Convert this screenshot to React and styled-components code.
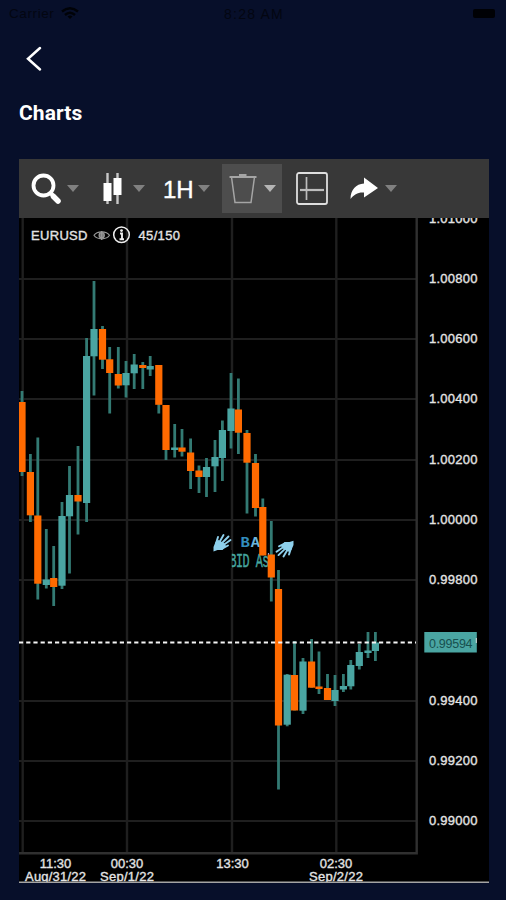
import styled, { createGlobalStyle } from "styled-components";

const GlobalStyle = createGlobalStyle`
  body {
    margin: 0;
    background-color: #070f2a;
    font-family: "Liberation Sans", Arial, sans-serif;
  }
`;
const Wrap = styled.div`
  box-sizing: border-box;
  width: 506px;
  height: 900px;
  padding: 0 17px 0 19px;
  background-color: #070f2a;
  overflow: hidden;
`;
const StatusBar = styled.div`
  display: grid;
  grid-template-columns: 1fr auto 1fr;
  align-items: center;
  height: 27px;
  margin: 0 -7px 0 -10px;
  font-size: 13.5px;
  letter-spacing: 0.6px;
  color: #030611;
`;
const Time = styled.span`
  padding-left: 3px;
  font-size: 14px;
  letter-spacing: 1.2px;
`;
const Carrier = styled.div`
  display: flex;
  align-items: center;
  gap: 7px;
`;
const Battery = styled.div`
  justify-self: end;
  width: 22px;
  height: 9px;
  margin-right: 1px;
  border-radius: 2px;
  background-color: #000105;
`;
const BackButton = styled.button`
  display: block;
  width: 30px;
  height: 30px;
  margin: 17px 0 0;
  padding: 0;
  border: 0;
  background: none;
`;
const Title = styled.h1`
  height: 24px;
  margin: 27px 0 34px;
  font-family: Roboto, sans-serif;
  font-size: 21px;
  font-weight: 700;
  letter-spacing: 0.1px;
  line-height: 24px;
  color: white;
`;
const Panel = styled.div`
  width: 470px;
  height: 724px;
  background-color: black;
`;
const Toolbar = styled.div`
  display: grid;
  grid-template-columns: 72px 66px 59px 72px 48px 74px;
  align-items: center;
  height: 59px;
  background-color: #383838;
`;
const Tool = styled.div`
  display: flex;
  align-items: center;
  justify-content: center;
  gap: ${(props) => props.$gap || 0}px;
  width: ${(props) => (props.$active ? "60px" : "auto")};
  height: 49px;
  justify-self: ${(props) => (props.$active ? "center" : "stretch")};
  background-color: ${(props) => (props.$active ? "#4d4d4d" : "transparent")};
`;
const Caret = styled.div`
  width: 0;
  height: 0;
  border-left: 6px solid transparent;
  border-right: 6px solid transparent;
  border-top: 7px solid ${(props) => (props.$light ? "#b5b5b5" : "#808080")};
`;
const Interval = styled.span`
  width: 30px;
  padding-top: 3px;
  font-size: 24px;
  letter-spacing: -0.2px;
  color: white;
  -webkit-text-stroke: 0.4px white;
`;
const ChartSvg = styled.svg`
  display: block;
`;
const Label = styled.text`
  font-family: "Liberation Sans", Arial, sans-serif;
  font-size: 13px;
  fill: #e4e4e4;
  stroke: #e4e4e4;
  stroke-width: 0.35px;
`;
const PriceTag = styled.text`
  font-family: "Liberation Sans", Arial, sans-serif;
  font-size: 12.5px;
  fill: #17504f;
`;
const MonoText = styled.text`
  font-family: "Liberation Mono", monospace;
  font-size: ${(props) => props.$size}px;
  font-weight: ${(props) => (props.$bold ? 700 : 400)};
`;

const UP = "#4aa5a2";
const DOWN = "#ff6a00";
const WICK = "#337a73";

// x, high, body top, body bottom, low, direction
const candles = [
  [22, 391, 402, 472, 476, 0],
  [30.4, 454, 472, 515.3, 522, 0],
  [37.8, 437.5, 515.5, 583.7, 599.5, 0],
  [46.3, 529, 579.5, 585, 588.5, 1],
  [53.7, 546, 578, 587, 606, 0],
  [62, 502, 516, 585.7, 589, 1],
  [69.5, 466, 495, 516.3, 573.5, 1],
  [78, 446, 495, 501.5, 534.5, 0],
  [86.6, 338, 356, 503, 522, 1],
  [94, 281, 329, 356.3, 395.5, 1],
  [102.5, 326, 329, 359.7, 369, 0],
  [109.7, 347, 359.3, 373, 413.5, 0],
  [118.3, 347, 374, 385.5, 388.5, 0],
  [126, 361, 373, 385.3, 397.5, 1],
  [134.2, 354, 364.5, 373.3, 389, 1],
  [142.8, 362, 365, 368, 389, 0],
  [150.2, 356, 366, 369.5, 376, 1],
  [158.8, 365, 365, 404.8, 413.5, 0],
  [166, 405, 405, 450, 460, 0],
  [174.7, 424, 447.5, 450, 457.5, 1],
  [182, 429, 447.5, 451.7, 456.5, 0],
  [190.6, 438.5, 452.5, 471, 489, 0],
  [199, 465.5, 470.5, 477, 493, 0],
  [206.5, 458, 467, 477, 497, 1],
  [215, 440, 457, 466.3, 492, 1],
  [222.4, 420.5, 430, 458, 481, 1],
  [231, 373, 408.5, 431, 448.5, 1],
  [238.4, 378.5, 409.5, 432.7, 454, 0],
  [247, 430, 433, 462.7, 513.5, 0],
  [255.5, 454, 463, 508, 516.5, 0],
  [262.8, 498.5, 507, 555.5, 555.5, 0],
  [271.3, 521, 554.5, 577.5, 601.5, 0],
  [278.5, 570, 589, 725.5, 789.5, 0],
  [287.2, 674, 674.7, 724.7, 726.3, 1],
  [294.5, 641, 675, 710.5, 710.5, 0],
  [303, 658, 661.5, 710.7, 714, 1],
  [311.6, 639, 661.5, 687.7, 687.7, 0],
  [319, 651.5, 686.5, 689, 694, 0],
  [327.5, 674, 688, 700, 700, 0],
  [335, 675, 690, 701, 706, 1],
  [343.4, 674, 686, 689.5, 692, 1],
  [350.8, 660, 665, 686.3, 689.5, 1],
  [359.3, 644, 652, 666, 669.5, 1],
  [368, 632, 650.5, 653, 658, 1],
  [375.4, 632, 642.5, 651, 661, 1],
];

const prices = [
  [219, "1.01000"],
  [279, "1.00800"],
  [339, "1.00600"],
  [399, "1.00400"],
  [460, "1.00200"],
  [520, "1.00000"],
  [580, "0.99800"],
  [701, "0.99400"],
  [761, "0.99200"],
  [821, "0.99000"],
];

const times = [
  [55.5, "11:30", "Aug/31/22"],
  [127, "00:30", "Sep/1/22"],
  [232.5, "13:30", ""],
  [336, "02:30", "Sep/2/22"],
];

const Hand = ({ transform }) => (
  <g transform={transform}>
    <path d="M0 16.5L0 12L2 7L5 5L11 8.5L12.5 11L9 15L4 15Z" fill="#8ed0ec" />
    <path
      d="M2.5 8.5L4.5 2M6 7L10 0M8.5 8L15 1.5M10 10L17 5M9 13.5L14.5 10.500"
      stroke="#8ed0ec"
      strokeWidth="1.9"
      strokeLinecap="round"
    />
  </g>
);

const Chart = () => (
  <ChartSvg width="470" height="665" viewBox="19 218 470 665" fill="none">
    {prices.slice(1).map(([y]) => (
      <path key={y} d={`M19 ${y}H416`} stroke="#1f1f1f" strokeWidth="2" />
    ))}
    {[22.7, 127, 232, 336.3].map((x) => (
      <path key={x} d={`M${x} 218V853`} stroke="#1f1f1f" strokeWidth="2.4" />
    ))}
    <path d="M416.7 218V853.3H19" stroke="#303030" strokeWidth="2.4" />

    <Hand transform="translate(213.5 535)" />
    <MonoText x="240.5" y="547" $size={15.5} $bold fill="#328dbd">
      B<tspan fill="#6bb5dc" dx="1">A</tspan>
    </MonoText>
    <MonoText
      transform="translate(229.5 566.5) scale(0.56 1)"
      $size={21}
      fill="#45a59f"
      stroke="#45a59f"
      strokeWidth="0.5"
      textLength="71"
    >
      BID As
    </MonoText>
    <rect x="228" y="550" width="3.7" height="18" fill="black" />
    <path d="M268.5 553V565" stroke="#a6a0d8" strokeWidth="1.2" />
    <Hand transform="translate(293.5 556.5) rotate(180) scale(1 0.96)" />

    {candles.map(([x, high, top, bottom, low, up]) => (
      <g key={x}>
        <path d={`M${x} ${high}V${low}`} stroke={WICK} strokeWidth="2.8" />
        <rect x={x - 3.6} y={top} width="7.2" height={bottom - top} fill={up ? UP : DOWN} />
      </g>
    ))}
    <path d="M19 642.5H416" stroke="#f4f4f4" strokeWidth="2" strokeDasharray="4.2 3" />

    <Label x="31" y="240" textLength="56.5">EURUSD</Label>
    <g stroke="#999" strokeWidth="1.2">
      <path d="M94 235.3C97 230.6 106.5 230.6 109.5 235.3C106.5 240 97 240 94 235.3Z" />
      <circle cx="101.7" cy="235.3" r="2.6" fill="#777" />
      <path d="M101.7 231V240" />
    </g>
    <circle cx="121.5" cy="234.8" r="7.8" stroke="#eee" strokeWidth="1.5" />
    <path d="M120 233.5H122V239M119.5 239.3H124" stroke="#eee" strokeWidth="1.9" />
    <circle cx="121.5" cy="230.6" r="1.4" fill="#eee" />
    <Label x="138.5" y="240" textLength="41.5">45/150</Label>

    {prices.map(([y, price]) => (
      <Label key={price} x="429" y={y + 4.2} textLength="48.5">{price}</Label>
    ))}
    <rect x="424.3" y="632" width="52.5" height="20.5" fill={UP} />
    <PriceTag x="429" y="648" textLength="43.5">0.99594</PriceTag>
    <path d="M476.3 638V643" stroke="#ddd" />

    {times.map(([x, hour, day]) => (
      <g key={hour} textAnchor="middle">
        <Label x={x} y="868">{hour}</Label>
        {day && <Label x={x} y="881.3" textLength={day.length > 8 ? 61 : 54}>{day}</Label>}
      </g>
    ))}
    <path d="M19 882.3H489" stroke="#a4a4a4" strokeWidth="1.5" />
  </ChartSvg>
);

export default function App() {
  return (
    <>
      <GlobalStyle />
      <Wrap>
        <StatusBar>
          <Carrier>
            Carrier
            <svg width="18" height="13" viewBox="0 0 18 13" fill="none" stroke="#000207" strokeWidth="2.4">
              <path d="M1 4.5Q9 -2 17 4.5M4 8Q9 3.5 14 8" />
              <path d="M6.5 9.5Q9 7.5 11.5 9.5L9 12Z" fill="#000207" stroke="none" />
            </svg>
          </Carrier>
          <Time>8:28 AM</Time>
          <Battery />
        </StatusBar>
        <BackButton aria-label="Back">
          <svg width="30" height="30" viewBox="0 0 30 30" fill="none">
            <path d="M21 4L9 14.7L21 25.5" stroke="white" strokeWidth="2.5" strokeLinecap="round" />
          </svg>
        </BackButton>
        <Title>Charts</Title>
        <Panel>
          <Toolbar>
            <Tool $gap={6}>
              <svg width="30" height="32" viewBox="0 0 30 32" fill="none" stroke="white">
                <circle cx="12.5" cy="12.5" r="10" strokeWidth="3.8" />
                <path d="M19.5 20L22 22.5" strokeWidth="4" />
                <path d="M22.5 23.5L27 28" strokeWidth="5.5" strokeLinecap="round" />
              </svg>
              <Caret />
            </Tool>
            <Tool $gap={11}>
              <svg width="19" height="32" viewBox="0 0 19 32">
                <path d="M4.5 0V31M14.5 0V31" stroke="#c8c8c8" strokeWidth="2.4" />
                <path d="M0.5 10H8.5V28H0.5ZM10.5 5H18.5V22H10.5Z" fill="white" />
              </svg>
              <Caret />
            </Tool>
            <Tool $gap={5}>
              <Interval>1H</Interval>
              <Caret />
            </Tool>
            <Tool $gap={7} $active>
              <svg width="28" height="32" viewBox="0 0 28 32" fill="none" stroke="#a5a5a5">
                <path d="M0.5 4H27.5" strokeWidth="2" />
                <path d="M10 2.5H17.5" strokeWidth="3" />
                <path d="M2.5 4L6 29.5H22L25.5 4" strokeWidth="1.5" />
              </svg>
              <Caret $light />
            </Tool>
            <Tool>
              <svg width="32" height="33" viewBox="0 0 32 33" fill="none" stroke="#dedede">
                <rect x="1" y="1" width="30" height="31" rx="2" strokeWidth="1.8" />
                <path d="M4 18H28" strokeWidth="2.2" stroke="#bdbdbd" />
                <path d="M10.5 5V28" strokeWidth="1.7" stroke="#bdbdbd" />
              </svg>
            </Tool>
            <Tool $gap={7}>
              <svg width="28" height="24" viewBox="0 0 28 24">
                <path d="M14 0.5L28 11L14 20.5V15.5C8 15 4 17.5 0.5 22C0.5 13 6 7 14 6.5Z" fill="white" />
              </svg>
              <Caret />
            </Tool>
          </Toolbar>
          <Chart />
        </Panel>
      </Wrap>
    </>
  );
}
